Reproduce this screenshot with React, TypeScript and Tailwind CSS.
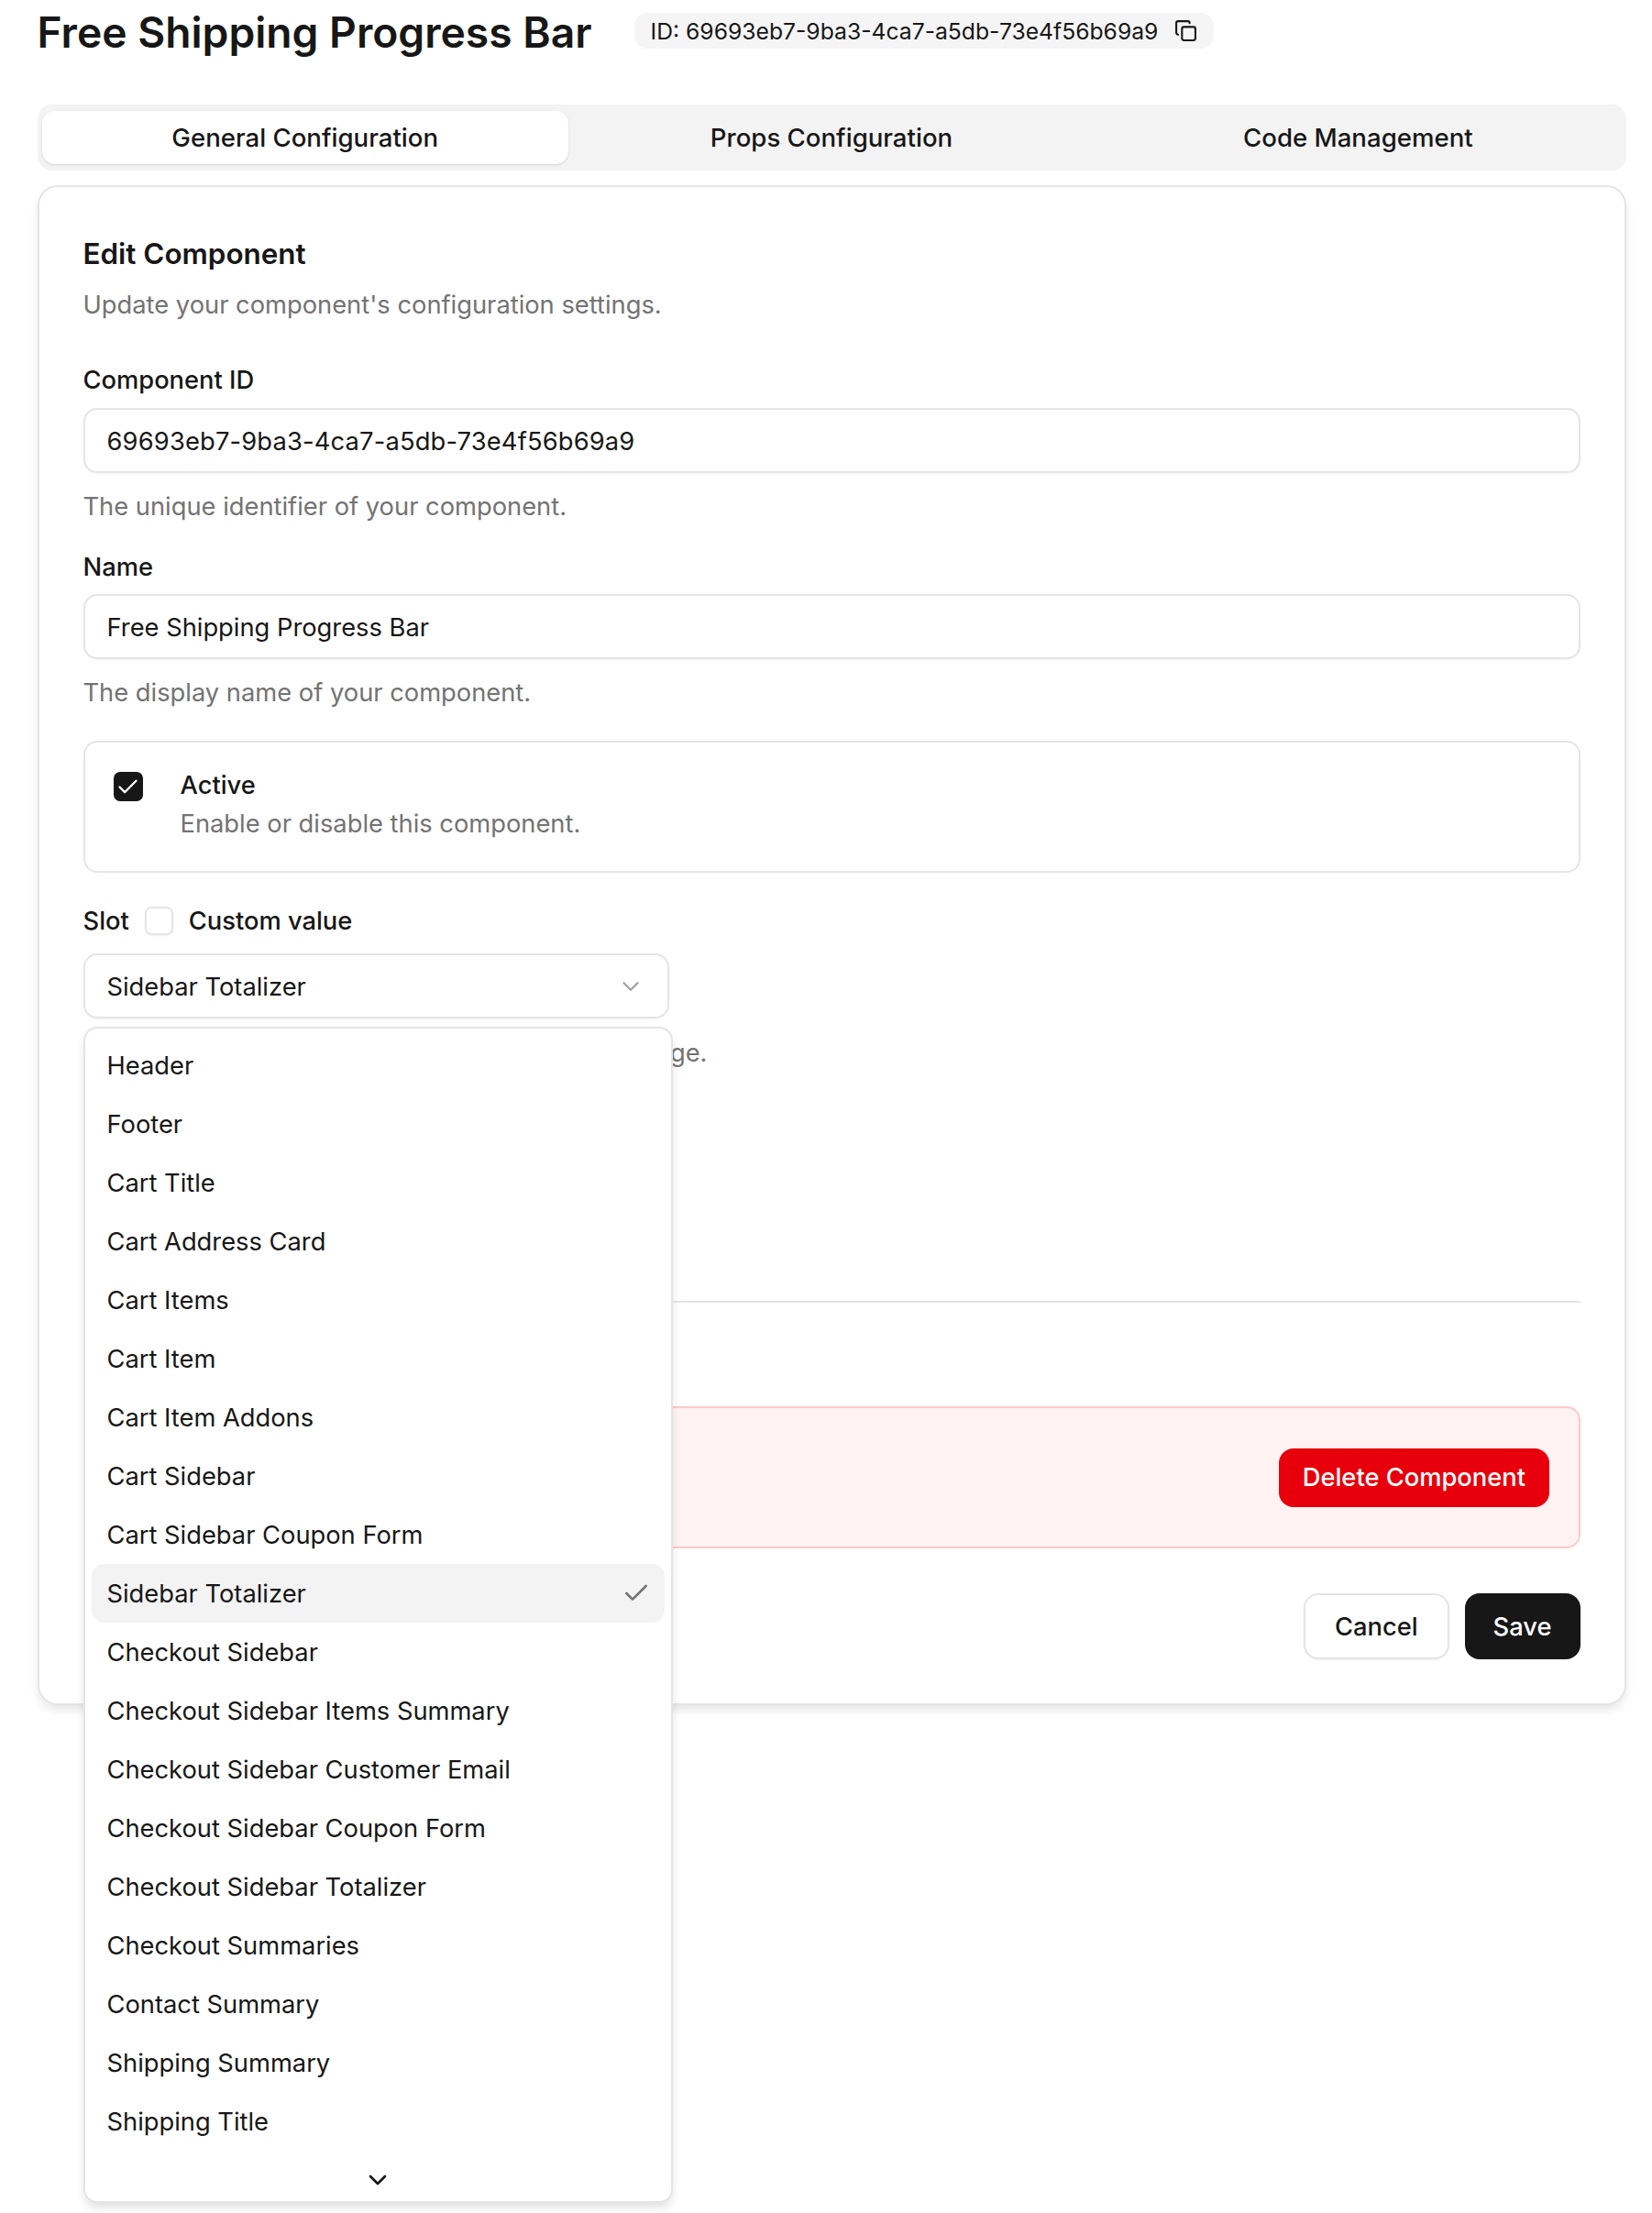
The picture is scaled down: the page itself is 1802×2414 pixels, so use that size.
import { Check, ChevronDown, Copy } from 'lucide-react'

const slots = [
  'Header',
  'Footer',
  'Cart Title',
  'Cart Address Card',
  'Cart Items',
  'Cart Item',
  'Cart Item Addons',
  'Cart Sidebar',
  'Cart Sidebar Coupon Form',
  'Sidebar Totalizer',
  'Checkout Sidebar',
  'Checkout Sidebar Items Summary',
  'Checkout Sidebar Customer Email',
  'Checkout Sidebar Coupon Form',
  'Checkout Sidebar Totalizer',
  'Checkout Summaries',
  'Contact Summary',
  'Shipping Summary',
  'Shipping Title',
]

const tabs = ['General Configuration', 'Props Configuration', 'Code Management']

function FieldLabel({ text, className }: { text: string; className: string }) {
  return <div className={`text-[27.3px] leading-[34px] font-medium text-neutral-900 ${className}`}>{text}</div>
}

function HelpText({ text, className }: { text: string; className: string }) {
  return <div className={`text-[27.3px] leading-[34px] text-neutral-500 ${className}`}>{text}</div>
}

function TextField({ value, className }: { value: string; className: string }) {
  return (
    <div
      className={`flex h-[71px] items-center rounded-[15px] border-2 border-neutral-200 bg-white pt-[3px] pl-[24px] text-[27.3px] text-neutral-900 shadow-xs ${className}`}
    >
      {value}
    </div>
  )
}

function SlotMenu() {
  return (
    <div className="absolute top-[80px] left-0 z-10 w-[643px] overflow-hidden rounded-[15px] border-2 border-neutral-200 bg-white px-[7px] pt-[8px] shadow-[0_6px_12px_-2px_rgba(0,0,0,0.14)]">
      {slots.map((slot) => (
        <div
          key={slot}
          className={`flex h-[64px] items-center justify-between rounded-[14px] pr-[15px] pl-[17px] text-[27.3px] text-neutral-900 ${
            slot === 'Sidebar Totalizer' ? 'bg-[#f3f3f3]' : ''
          }`}
        >
          <span className="pt-[2px]">{slot}</span>
          {slot === 'Sidebar Totalizer' ? <Check size={32} className="text-neutral-500" /> : null}
        </div>
      ))}
      <div className="flex h-[55px] items-center justify-center pt-[8px] text-neutral-900">
        <ChevronDown size={32} />
      </div>
    </div>
  )
}

export default function App() {
  return (
    <div className="h-[2414px] overflow-hidden bg-white pr-[28.5px] pl-[40.5px] font-['Inter',sans-serif] text-neutral-900">
      <div className="flex items-start pt-[14px]">
        <h1 className="text-[46.2px] leading-[42px] font-semibold">Free Shipping Progress Bar</h1>
        <div className="ml-[46px] flex h-[39px] items-center gap-[18px] rounded-[14px] bg-neutral-100 px-[18px] text-[24.7px]">
          <span className="pt-[2px]">ID: 69693eb7-9ba3-4ca7-a5db-73e4f56b69a9</span>
          <Copy size={25} />
        </div>
      </div>

      <div className="mt-[58px] grid h-[72px] grid-cols-3 rounded-[16px] bg-[#f3f3f3] px-[5px] py-[7px] text-[27.6px] font-medium">
        {tabs.map((tab, i) => (
          <div
            key={tab}
            className={`flex items-center justify-center rounded-[14px] pt-[1px] ${i === 0 ? 'bg-white shadow-sm' : ''}`}
          >
            {tab}
          </div>
        ))}
      </div>

      <div className="mt-[16px] rounded-[22px] border-2 border-neutral-200 bg-white px-[48px] pt-[56px] pb-[48px] shadow-[0_6px_12px_-2px_rgba(0,0,0,0.12)]">
        <h2 className="text-[31.4px] leading-[34px] font-semibold">Edit Component</h2>
        <HelpText className="mt-[22px]" text="Update your component's configuration settings." />

        <FieldLabel className="mt-[48px]" text="Component ID" />
        <TextField className="mt-[13px] tracking-[0.17px]" value="69693eb7-9ba3-4ca7-a5db-73e4f56b69a9" />
        <HelpText className="mt-[20px]" text="The unique identifier of your component." />

        <FieldLabel className="mt-[32px]" text="Name" />
        <TextField className="mt-[12px]" value="Free Shipping Progress Bar" />
        <HelpText className="mt-[20px]" text="The display name of your component." />

        <div className="mt-[35px] flex rounded-[15px] border-2 border-neutral-200 pt-[30px] pb-[34px] pl-[31px]">
          <div className="mt-[2px] flex h-[32px] w-[32px] items-center justify-center rounded-[7px] bg-neutral-900 text-white">
            <Check size={27} strokeWidth={2} />
          </div>
          <div className="ml-[41px]">
            <FieldLabel className="" text="Active" />
            <HelpText className="mt-[8px]" text="Enable or disable this component." />
          </div>
        </div>

        <div className="mt-[35px] flex h-[34px] items-center">
          <FieldLabel className="pt-[2px]" text="Slot" />
          <div className="mt-[1px] ml-[17px] h-[31px] w-[31px] rounded-[7px] border-2 border-neutral-200 shadow-xs" />
          <FieldLabel className="ml-[17px] pt-[2px]" text="Custom value" />
        </div>

        <div className="relative mt-[19px]">
          <div className="flex h-[71px] w-[639px] items-center justify-between rounded-[15px] border-2 border-neutral-200 pr-[25px] pl-[24px] text-[27.3px] shadow-xs">
            <span className="pt-[3px]">Sidebar Totalizer</span>
            <ChevronDown size={30} strokeWidth={1.8} className="text-neutral-400" />
          </div>
          <SlotMenu />
        </div>
        <HelpText className="mt-[21px]" text="The slot where this component appears on the page." />

        <div className="mt-[253px] h-[2px] bg-neutral-200" />

        <div className="mt-[113px] flex h-[155px] items-center justify-end rounded-[15px] border-2 border-red-200 bg-red-50 pr-[32px]">
          <button className="h-[64px] rounded-[16px] bg-red-600 px-[25.5px] pt-[1px] text-[27.3px] font-medium text-white">
            Delete Component
          </button>
        </div>

        <div className="mt-[49px] flex justify-end gap-[17px]">
          <button className="h-[72px] rounded-[16px] border-2 border-neutral-200 bg-white px-[32px] pt-[2px] text-[27.3px] font-medium shadow-xs">
            Cancel
          </button>
          <button className="h-[72px] rounded-[16px] bg-neutral-900 px-[31px] pt-[2px] text-[27.3px] font-medium text-white">
            Save
          </button>
        </div>
      </div>
    </div>
  )
}
